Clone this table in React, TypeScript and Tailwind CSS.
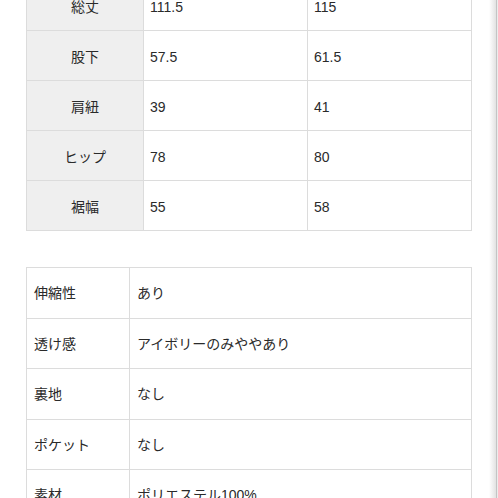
import React from "react";

const sizeRows = [
  { label: "総丈", a: "111.5", b: "115" },
  { label: "股下", a: "57.5", b: "61.5" },
  { label: "肩紐", a: "39", b: "41" },
  { label: "ヒップ", a: "78", b: "80" },
  { label: "裾幅", a: "55", b: "58" },
];

const specRows = [
  { label: "伸縮性", value: "あり" },
  { label: "透け感", value: "アイボリーのみややあり" },
  { label: "裏地", value: "なし" },
  { label: "ポケット", value: "なし" },
  { label: "素材", value: "ポリエステル100%" },
];

export default function App() {
  return (
    <div
      className="w-[498px] h-[498px] overflow-hidden bg-white flex text-[14px] text-[#2a2a2a]"
      style={{ fontFamily: '"Liberation Sans", "Noto Sans CJK JP", sans-serif' }}
    >
      <div className="flex-1 pl-[26px] pr-[17px]">
        {/* Size table */}
        <table className="mt-[-20px] w-[445px] table-fixed border-collapse">
          <colgroup>
            <col className="w-[117px]" />
            <col className="w-[164px]" />
            <col className="w-[164px]" />
          </colgroup>
          <tbody>
            {sizeRows.map((row) => (
              <tr key={row.label} className="h-[50px]">
                <td className="border border-[#dcdcdc] bg-[#efefef] pt-[4px] text-center align-middle">
                  {row.label}
                </td>
                <td className="border border-[#dcdcdc] px-[6px] pt-[4px] align-middle">{row.a}</td>
                <td className="border border-[#dcdcdc] px-[6px] pt-[4px] align-middle">{row.b}</td>
              </tr>
            ))}
          </tbody>
        </table>

        {/* Spec table */}
        <table className="mt-[36px] w-[445px] table-fixed border-collapse">
          <colgroup>
            <col className="w-[103px]" />
            <col className="w-[342px]" />
          </colgroup>
          <tbody>
            {specRows.map((row) => (
              <tr key={row.label} className="h-[50.5px]">
                <td className="border border-[#dcdcdc] px-[7px] pt-[2px] align-middle">{row.label}</td>
                <td className="border border-[#dcdcdc] px-[7px] pt-[2px] align-middle">{row.value}</td>
              </tr>
            ))}
          </tbody>
        </table>
      </div>

      {/* right edge shadow */}
      <div className="w-[10px] flex">
        <div className="w-[7px] bg-gradient-to-r from-white to-[#e2e2e2]" />
        <div className="w-[1px] bg-[#c4c4c4]" />
        <div className="w-[2px] bg-[#ececec]" />
      </div>
    </div>
  );
}
